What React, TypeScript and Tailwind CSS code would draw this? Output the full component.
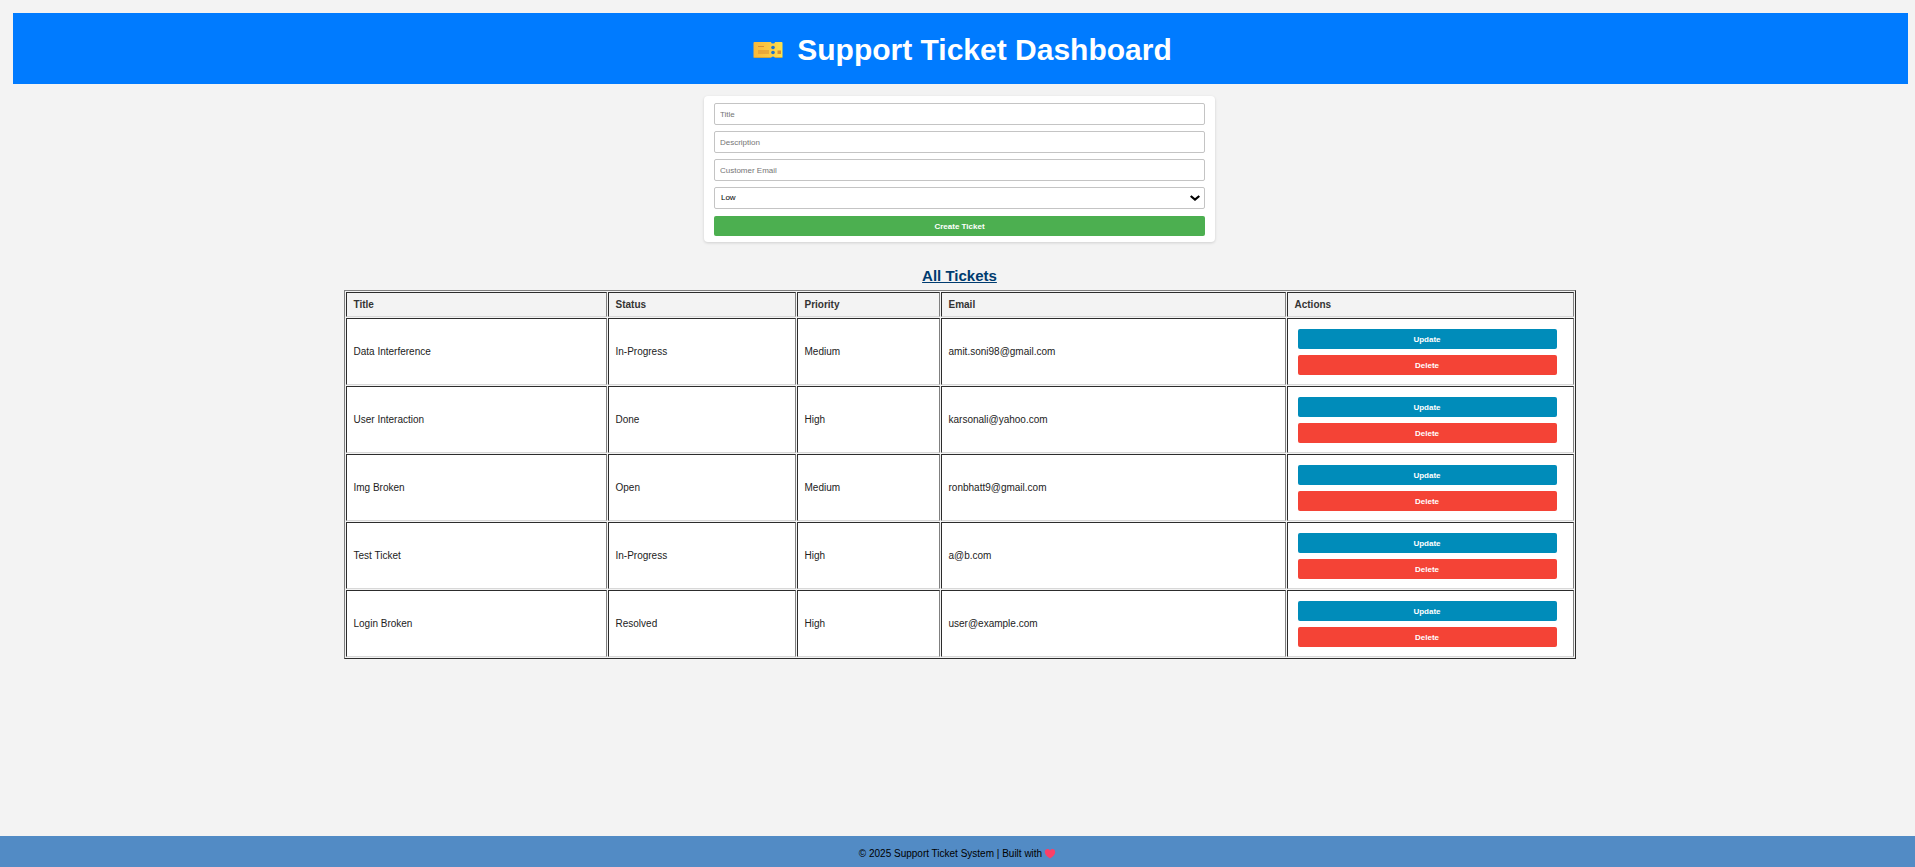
type Ticket = { title: string; status: string; priority: string; email: string };

const tickets: Ticket[] = [
  { title: "Data Interference", status: "In-Progress", priority: "Medium", email: "amit.soni98@gmail.com" },
  { title: "User Interaction", status: "Done", priority: "High", email: "karsonali@yahoo.com" },
  { title: "Img Broken", status: "Open", priority: "Medium", email: "ronbhatt9@gmail.com" },
  { title: "Test Ticket", status: "In-Progress", priority: "High", email: "a@b.com" },
  { title: "Login Broken", status: "Resolved", priority: "High", email: "user@example.com" },
];

const cellBorder = "border border-t-[#2c2c2c] border-l-[#2c2c2c] border-r-[#808080] border-b-[#d8d8d8]";
const field =
  "h-[22px] w-full rounded-[2px] border border-[#c4c4c4] bg-white text-[8px] leading-3 outline-none placeholder:text-[#757575]";
const button = "block h-5 rounded-[2px] pt-px text-center text-[8px] leading-5 font-bold text-white cursor-pointer";

function TicketIcon() {
  return (
    <svg viewBox="0 0 30 18" className="h-[18px] w-[30px]" aria-hidden="true">
      <defs>
        <linearGradient id="ticket" x1="0" x2="1" y1="0" y2="0">
          <stop offset="0" stopColor="#f9b83a" />
          <stop offset="0.6" stopColor="#fbcb45" />
          <stop offset="1" stopColor="#fbe24c" />
        </linearGradient>
      </defs>
      <path
        d="M1.500 1H18a2 1.500 0 0 0 4 0H28.500a1 1 0 0 1 1 1V16a1 1 0 0 1-1 1H22a2 1.500 0 0 0-4 0H1.500a1 1 0 0 1-1-1V2a1 1 0 0 1 1-1Z"
        fill="url(#ticket)"
      />
      <path d="M1 16.500H18M22 16.500H29" stroke="#c9a548" strokeWidth="1" />
      <path d="M5 5.500H11M5 10H16M5 12H16" stroke="#d98c33" strokeWidth="1" />
      <circle cx="20" cy="6.500" r="1.800" fill="#1d75cf" />
      <circle cx="20" cy="11.500" r="1.800" fill="#1d75cf" />
      <rect x="24.500" y="9.500" width="3.500" height="3.500" fill="#d98c33" />
    </svg>
  );
}

function HeartIcon() {
  return (
    <svg viewBox="0 0 12 11" className="h-[11px] w-3" aria-hidden="true">
      <path
        d="M6 10.500C3 8.500 .8 6.500 .8 4C.8 2.200 2 1 3.500 1C4.700 1 5.600 1.700 6 2.700C6.400 1.700 7.300 1 8.500 1C10 1 11.200 2.200 11.200 4C11.200 6.500 9 8.500 6 10.500Z"
        fill="#fb3f68"
      />
    </svg>
  );
}

export default function App() {
  return (
    <div className="flex min-h-screen flex-col bg-[#f3f3f3] font-['Liberation_Sans',Arial,sans-serif] text-[#222]">
      <div className="flex-1 pt-[13px] pr-[7px] pb-4 pl-[13px]">
        <header className="flex h-[71px] items-center justify-center gap-[14px] bg-[#007bff] pt-[2px] pl-1 text-white">
          <TicketIcon />
          <h1 className="text-[30px] leading-9 font-bold">Support Ticket Dashboard</h1>
        </header>

        <main className="flex flex-col items-center pr-[2px]">
          <form
            className="mt-3 flex w-[27%] min-w-64 flex-col gap-[6px] rounded-[4px] bg-white px-[10px] pt-[7px] pb-[6px] shadow-[0_1px_3px_rgba(0,0,0,0.15)]"
            onSubmit={(e) => e.preventDefault()}
          >
            <input className={`${field} px-[5px]`} type="text" placeholder="Title" aria-label="Title" />
            <input className={`${field} px-[5px]`} type="text" placeholder="Description" aria-label="Description" />
            <input className={`${field} px-[5px]`} type="email" placeholder="Customer Email" aria-label="Customer Email" />
            <div className="relative h-[22px]">
              <select className={`${field} block appearance-none px-[6px] text-black`} aria-label="Priority">
                <option>Low</option>
                <option>Medium</option>
                <option>High</option>
              </select>
              <svg
                viewBox="0 0 10 6"
                className="pointer-events-none absolute top-2 right-[5px] h-[6px] w-[10px]"
                aria-hidden="true"
              >
                <path d="M.7 1L5 4.600L9.300 1" fill="none" stroke="#000" strokeWidth="2.200" />
              </svg>
            </div>
            <button type="submit" className={`${button} mt-px w-full bg-[#4caf50]`}>
              Create Ticket
            </button>
          </form>

          <h2 className="mt-6 mb-1 text-[15px] leading-5 font-bold text-[#003b6f] underline">All Tickets</h2>

          <table className="w-[65%] table-fixed border-separate border-spacing-px border border-t-[#808080] border-r-[#2c2c2c] border-b-[#2c2c2c] border-l-[#808080] text-left text-[10px] leading-3">
            <colgroup>
              <col className="w-[261px]" />
              <col className="w-[188px]" />
              <col className="w-[143px]" />
              <col className="w-[345px]" />
              <col className="w-[287px]" />
            </colgroup>
            <thead>
              <tr className="h-[25px]">
                {["Title", "Status", "Priority", "Email", "Actions"].map((name) => (
                  <th key={name} scope="col" className={`${cellBorder} px-[7px] font-bold text-[#333]`}>
                    {name}
                  </th>
                ))}
              </tr>
            </thead>
            <tbody>
              {tickets.map((t) => (
                <tr key={t.title} className="h-[67px] bg-white">
                  <td className={`${cellBorder} px-[7px]`}>{t.title}</td>
                  <td className={`${cellBorder} px-[7px]`}>{t.status}</td>
                  <td className={`${cellBorder} px-[7px]`}>{t.priority}</td>
                  <td className={`${cellBorder} px-[7px]`}>{t.email}</td>
                  <td className={`${cellBorder} pr-4 pl-[10px]`}>
                    <div className="flex flex-col gap-[6px]">
                      <button type="button" className={`${button} w-full bg-[#008cba]`}>
                        Update
                      </button>
                      <button type="button" className={`${button} w-full bg-[#f44336]`}>
                        Delete
                      </button>
                    </div>
                  </td>
                </tr>
              ))}
            </tbody>
          </table>
        </main>
      </div>

      <footer className="flex h-[31px] items-center justify-center gap-[2px] bg-[#528bc5] pt-1 text-[10px] leading-3 text-black">
        <p>© 2025 Support Ticket System | Built with</p>
        <HeartIcon />
      </footer>
    </div>
  );
}
